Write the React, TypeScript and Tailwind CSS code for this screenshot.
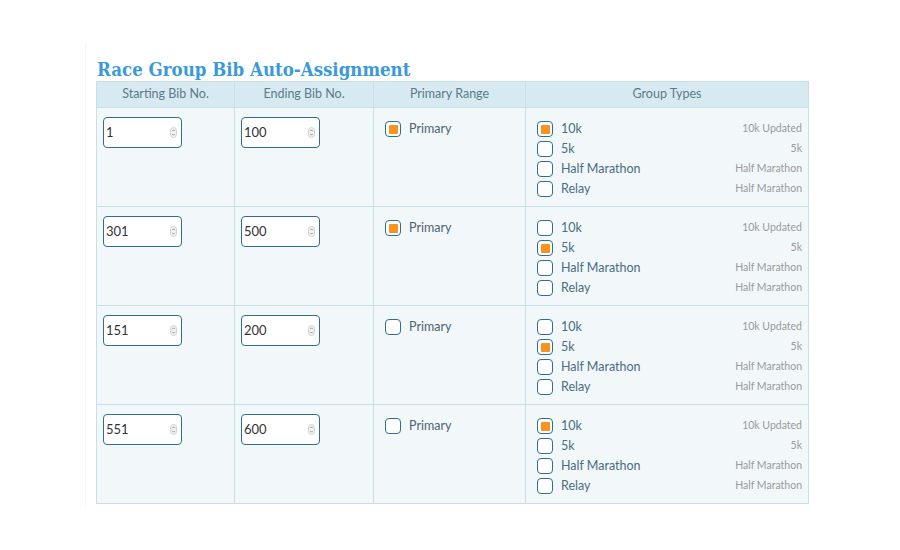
import React from "react";

const rows = [
  { start: "1", end: "100", primary: true, checked: 0 },
  { start: "301", end: "500", primary: true, checked: 1 },
  { start: "151", end: "200", primary: false, checked: 1 },
  { start: "551", end: "600", primary: false, checked: 0 },
];

const groups = [
  { name: "10k", note: "10k Updated" },
  { name: "5k", note: "5k" },
  { name: "Half Marathon", note: "Half Marathon" },
  { name: "Relay", note: "Half Marathon" },
];

function Box({ on }: { on: boolean }) {
  return (
    <span className="flex h-[16px] w-[16px] shrink-0 items-center justify-center rounded-[4px] border-[1.5px] border-[#2f6f8c] bg-white">
      {on && <span className="h-[9px] w-[9px] rounded-[1px] bg-[#f7931e]" />}
    </span>
  );
}

function NumInput({ value }: { value: string }) {
  return (
    <div className="flex h-[31px] w-[79px] items-center justify-between rounded-[4px] border-[1.5px] border-[#2f6f8c] bg-white pl-[2px] pr-[4px]">
      <span className="text-[13px] text-[#333]">{value}</span>
      <svg width="7" height="11" viewBox="0 0 7 11">
        <rect x="0.5" y="0.5" width="6" height="10" rx="3" fill="#f4f4f4" stroke="#c8c8c8" strokeWidth="0.8" />
        <path d="M2.2 4.2 L3.5 2.8 L4.8 4.2" fill="none" stroke="#777" strokeWidth="0.8" />
        <path d="M2.2 6.8 L3.5 8.2 L4.8 6.8" fill="none" stroke="#777" strokeWidth="0.8" />
      </svg>
    </div>
  );
}

export default function App() {
  return (
    <div className="h-[550px] w-[900px] bg-white" style={{ fontFamily: "Lato, 'Open Sans', sans-serif" }}>
      <div className="ml-[85px] flex h-[462px] translate-y-[44px] flex-col border-l border-dotted border-[#ececec] pl-[10px] pt-[14px]">
        <h1
          className="pl-[1px] text-[18.5px] font-bold leading-[23px] text-[#3a9ad9]"
          style={{ fontFamily: "'DejaVu Serif Condensed', 'DejaVu Serif', serif", fontStretch: "condensed" }}
        >
          Race Group Bib Auto-Assignment
        </h1>
        <div className="w-[713px] border border-[#c6dfe9]">
          <div className="grid h-[25px] grid-cols-[138px_139px_152px_1fr] bg-[#d8eaf1] text-[12.5px] text-[#5b7a8b]">
            <div className="flex items-center justify-center border-r border-[#c6dfe9]">Starting Bib No.</div>
            <div className="flex items-center justify-center border-r border-[#c6dfe9]">Ending Bib No.</div>
            <div className="flex items-center justify-center border-r border-[#c6dfe9]">Primary Range</div>
            <div className="flex items-center justify-center">Group Types</div>
          </div>
          {rows.map((r, i) => (
            <div
              key={i}
              className="grid h-[99px] grid-cols-[138px_139px_152px_1fr] border-t border-[#c6dfe9] bg-[#f2f7fa]"
            >
              <div className="border-r border-[#c6dfe9] pl-[6px] pt-[9px]">
                <NumInput value={r.start} />
              </div>
              <div className="border-r border-[#c6dfe9] pl-[6px] pt-[9px]">
                <NumInput value={r.end} />
              </div>
              <div className="border-r border-[#c6dfe9] pl-[11px] pt-[12px]">
                <div className="flex items-center gap-[8px] text-[12.5px] text-[#4d6373]">
                  <Box on={r.primary} />
                  <span>Primary</span>
                </div>
              </div>
              <div className="flex flex-col pl-[11px] pr-[6px] pt-[11px]">
                {groups.map((g, j) => (
                  <div key={j} className="flex h-[20px] items-center">
                    <Box on={r.checked === j} />
                    <span className="ml-[8px] text-[12.5px] text-[#4a6d82]">{g.name}</span>
                    <span className="ml-auto text-[10.5px] text-[#9a9a9a]">{g.note}</span>
                  </div>
                ))}
              </div>
            </div>
          ))}
        </div>
      </div>
    </div>
  );
}
